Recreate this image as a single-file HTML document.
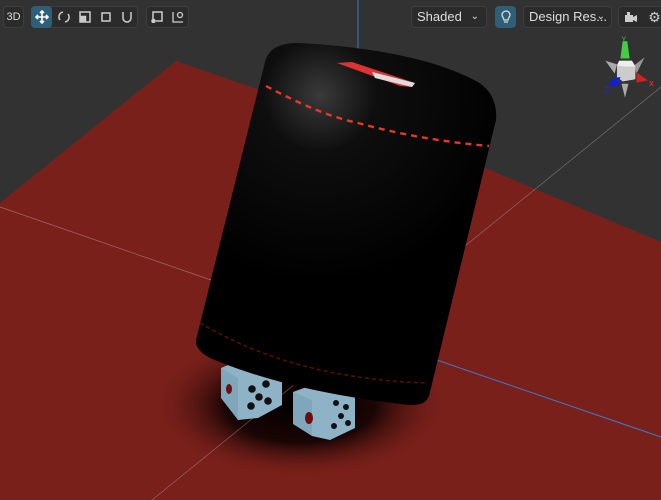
<!DOCTYPE html>
<html><head><meta charset="utf-8"><style>
body{margin:0;width:661px;height:500px;overflow:hidden;background:#333;font-family:"Liberation Sans",sans-serif;position:relative}
svg.s{position:absolute;left:0;top:0}
.b{position:absolute;top:6px;height:22px;border:1px solid #3e3e3e;border-radius:4px;background:#2b2b2b;box-sizing:border-box;color:#ddd;font-size:13px}
.i{position:absolute;top:6px;width:21px;height:22px;display:flex;align-items:center;justify-content:center}
</style></head><body>
<svg class="s" width="661" height="500" viewBox="0 0 661 500">
<defs>
<radialGradient id="sh" cx="300" cy="405" r="150" gradientUnits="userSpaceOnUse" gradientTransform="translate(300 405) scale(1 0.5) translate(-300 -405)">
<stop offset="0" stop-color="#000" stop-opacity="1"/><stop offset="0.5" stop-color="#150403" stop-opacity="0.95"/><stop offset="1" stop-color="#7a201b" stop-opacity="0"/></radialGradient>
<radialGradient id="cup" cx="320" cy="95" r="190" gradientUnits="userSpaceOnUse"><stop offset="0" stop-color="#3a3a3a"/><stop offset="0.3" stop-color="#0e0e0e"/><stop offset="1" stop-color="#000"/></radialGradient>
</defs>
<rect x="0" y="0" width="661" height="500" fill="#323232"/>
<polygon points="176,61 485,168 661,242 661,500 0,500 0,203" fill="#7a201b"/>
<ellipse cx="300" cy="405" rx="165" ry="80" fill="url(#sh)"/>
<line x1="0" y1="207" x2="211" y2="280" stroke="#b08a88" stroke-width="0.7" opacity="0.7"/>
<line x1="661" y1="87" x2="152" y2="500" stroke="#aaa" stroke-width="0.7" opacity="0.5"/>
<line x1="358" y1="0" x2="358" y2="333" stroke="#3a7ad0" stroke-width="1"/>
<line x1="358" y1="333" x2="661" y2="437" stroke="#3a7ad0" stroke-width="1"/>
<!-- dice -->
<g>
<polygon points="221,368 240,360 282,372 282,405 258,418 238,420 221,395" fill="#8fb3c6"/>
<polygon points="221,368 238,378 238,420 221,398" fill="#7fa6ba"/>
<ellipse cx="229" cy="389" rx="3" ry="5" fill="#6a0f0f"/>
<circle cx="252" cy="389" r="3.8" fill="#111"/><circle cx="266" cy="384" r="3.8" fill="#111"/><circle cx="259" cy="397" r="3.8" fill="#111"/><circle cx="251" cy="406" r="3.8" fill="#111"/><circle cx="268" cy="401" r="3.8" fill="#111"/>
<polygon points="293,392 320,382 355,392 355,428 330,440 312,436 293,422" fill="#8fb3c6"/>
<polygon points="293,392 312,400 312,436 293,424" fill="#7fa6ba"/>
<ellipse cx="309" cy="418" rx="4" ry="6" fill="#6a0f0f"/>
<circle cx="336" cy="403" r="3" fill="#111"/><circle cx="346" cy="407" r="3" fill="#111"/><circle cx="341" cy="416" r="3" fill="#111"/><circle cx="334" cy="426" r="3" fill="#111"/><circle cx="348" cy="423" r="3" fill="#111"/>
<circle cx="246" cy="366" r="3" fill="#6a0f0f"/><circle cx="322" cy="385" r="3" fill="#6a0f0f"/><circle cx="303" cy="384" r="3" fill="#6a0f0f"/>
</g>
<!-- cup -->
<path d="M265,62 Q270,42 300,43 Q420,50 478,82 Q498,95 496,120 L430,392 Q428,406 410,405 Q290,392 210,358 Q195,350 196,340 Z" fill="url(#cup)"/>
<path d="M266,86 Q320,115 358,123 Q420,140 489,146" fill="none" stroke="#e8362c" stroke-width="2.4" stroke-dasharray="6,5"/>
<path d="M200,323 Q260,358 330,372 Q380,382 428,383" fill="none" stroke="#5a0f0d" stroke-width="1.5" stroke-dasharray="4,3"/>
<polygon points="337,63 352,62 415,83 412,87 400,86" fill="#d33"/>
<polygon points="372,72 415,83 412,87 375,78" fill="#ddd"/>
<!-- gizmo -->
<g transform="translate(625,70) scale(1.15)">
<polygon points="-17,-8 -7,-5 -9,3" fill="#aaa"/><polygon points="17,-11 8,-4 10,3" fill="#999"/>
<polygon points="-5,-8 6,-8 9,-3 9,8 -2,10 -7,6 -7,-4" fill="#ccc"/>
<polygon points="-5,-8 6,-8 9,-3 -1,-3 -7,-4" fill="#eee"/>
<polygon points="-2,-25 2,-25 4,-10 -4,-10" fill="#4c4"/>
<polygon points="10,2 20,9 10,11" fill="#c22"/>
<polygon points="-12,8 -4,6 -6,14 -14,14" fill="#12c"/>
<polygon points="-3,12 3,12 0,24" fill="#aaa"/>
<text x="21" y="14" font-size="8" fill="#e33" font-family="Liberation Sans">x</text>
<text x="-3" y="-25" font-size="6" fill="#4c4">Y</text>
<text x="-18" y="20" font-size="7" fill="#22e">Z</text>
</g>
</svg>
<!-- toolbar -->
<div class="b" style="left:3px;width:21px;text-align:center;line-height:20px;font-size:11px">3D</div>
<div class="b" style="left:31px;width:107px"></div>
<div class="i" style="left:31px;background:#2d5f78;border-radius:4px"><svg width="14" height="14" viewBox="0 0 14 14" fill="none" stroke="#fff" stroke-width="1.6"><path d="M7 1V13M1 7H13M5 3L7 1L9 3M5 11L7 13L9 11M3 5L1 7L3 9M11 5L13 7L11 9"/></svg></div>
<div class="i" style="left:53px"><svg width="12" height="12" viewBox="0 0 12 12" fill="none" stroke="#ccc" stroke-width="1.5"><path d="M2 9A5 5 0 0 1 5 1M10 3A5 5 0 0 1 7 11"/></svg></div>
<div class="i" style="left:74px"><svg width="12" height="12" viewBox="0 0 12 12" fill="none" stroke="#ccc" stroke-width="1.5"><rect x="1" y="1" width="10" height="10"/><rect x="1.5" y="5.5" width="5" height="5" fill="#ccc"/></svg></div>
<div class="i" style="left:95px"><svg width="12" height="12" viewBox="0 0 12 12" fill="none" stroke="#ccc" stroke-width="1.5"><rect x="2" y="2" width="8" height="8"/></svg></div>
<div class="i" style="left:116px"><svg width="12" height="12" viewBox="0 0 12 12" fill="none" stroke="#ccc" stroke-width="1.5"><path d="M2 1V7A4 4 0 0 0 10 7V1"/></svg></div>
<div class="b" style="left:146px;width:43px"></div>
<div class="i" style="left:146px"><svg width="12" height="12" viewBox="0 0 12 12" fill="none" stroke="#ccc" stroke-width="1.5"><path d="M2 8V1H11V10H5"/><circle cx="2.5" cy="10" r="1.5" fill="#ccc"/></svg></div>
<div class="i" style="left:167px"><svg width="12" height="12" viewBox="0 0 12 12" fill="none" stroke="#ccc" stroke-width="1.3"><path d="M1 1V11H11"/><circle cx="8" cy="4" r="2.5"/></svg></div>
<div class="b" style="left:411px;width:76px;padding-left:5px;line-height:20px">Shaded<span style="position:absolute;right:7px;font-size:10px">⌄</span></div>
<div class="i" style="left:495px;background:#2d5f78;border-radius:4px"><svg width="12" height="14" viewBox="0 0 12 14" fill="none" stroke="#ddd" stroke-width="1.3"><path d="M4 10C4 8 2 7 2 5A4 4 0 0 1 10 5C10 7 8 8 8 10ZM4 12H8"/></svg></div>
<div class="b" style="left:523px;width:89px;padding-left:5px;line-height:20px">Design Res...<span style="position:absolute;right:6px;font-size:10px">⌄</span></div>
<div class="b" style="left:618px;width:50px"></div>
<div class="i" style="left:620px"><svg width="14" height="12" viewBox="0 0 14 12" fill="#ccc"><rect x="1" y="4" width="8" height="7"/><path d="M9 6L13 4V11L9 9Z"/><rect x="3" y="1" width="3" height="3"/></svg></div>
<div class="i" style="left:644px;color:#ccc;font-size:14px">⚙</div>
</body></html>
